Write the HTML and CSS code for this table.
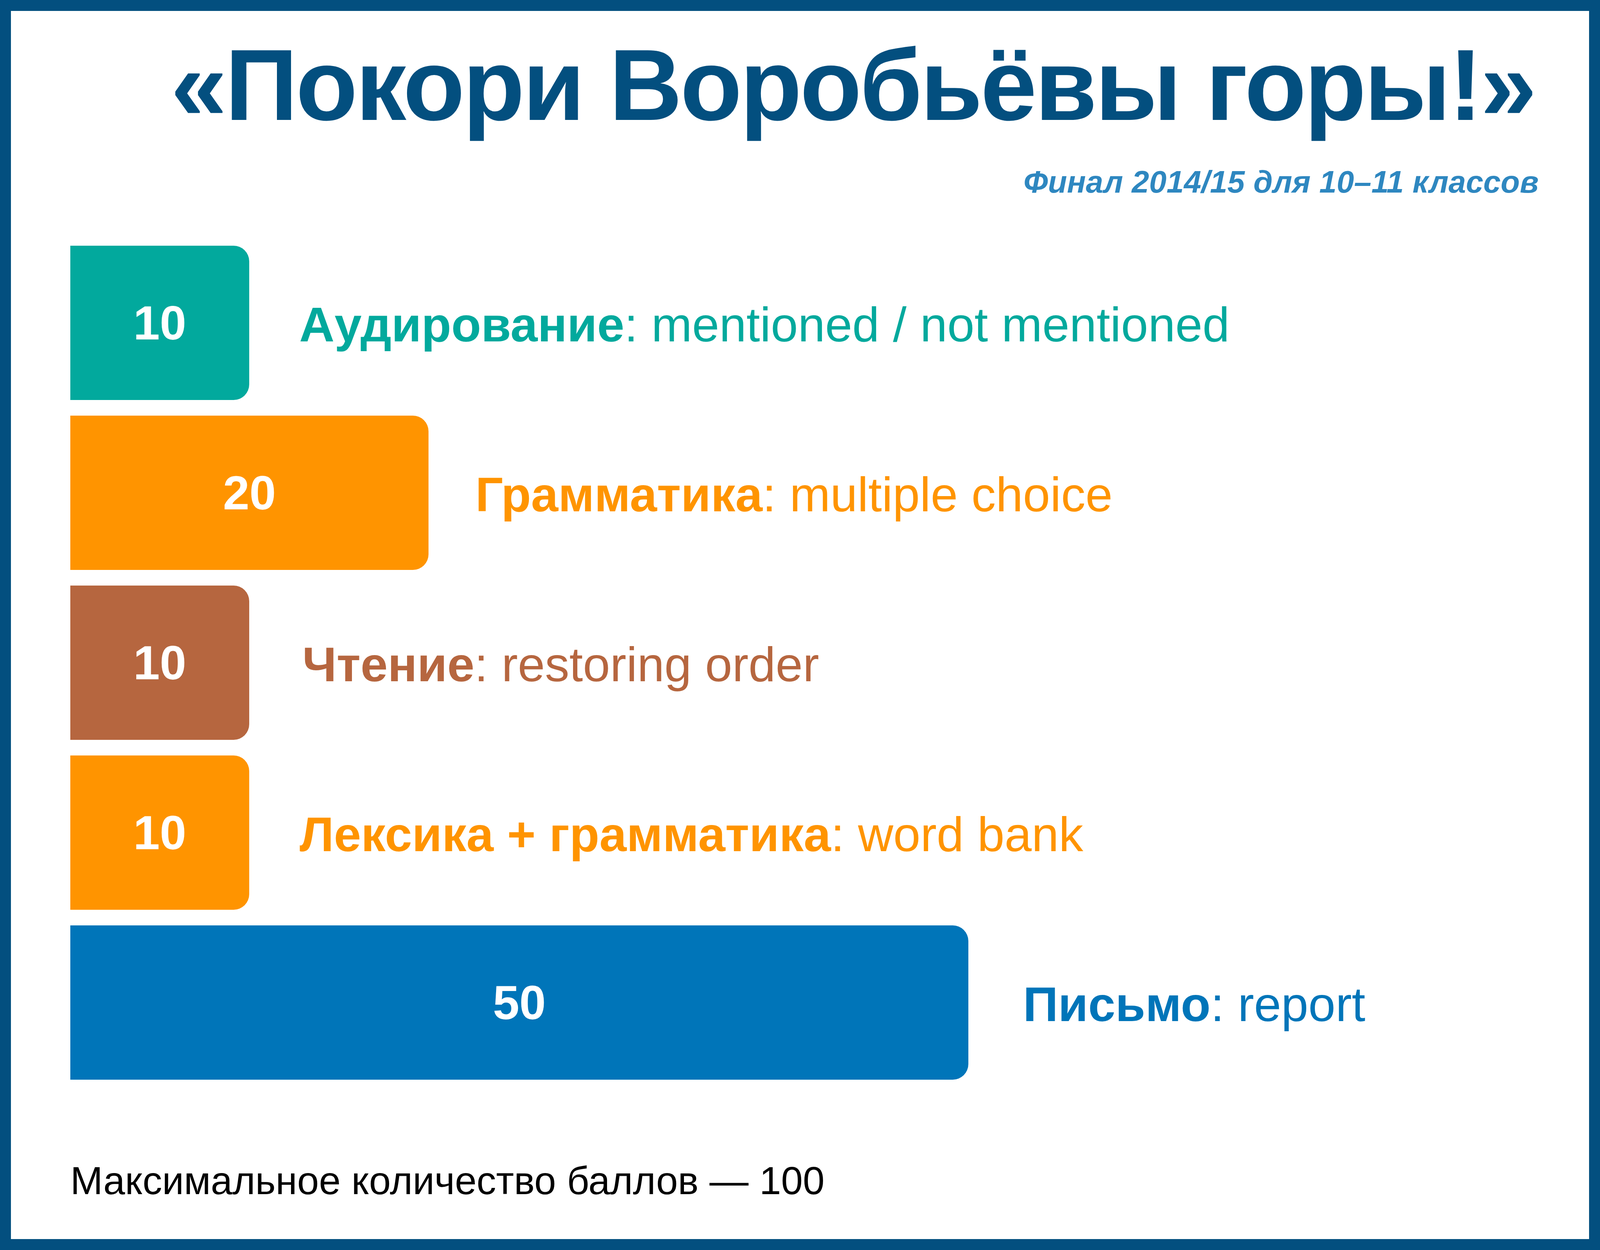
FILE: index.html
```html
<!DOCTYPE html>
<html lang="ru">
<head>
<meta charset="utf-8">
<title>«Покори Воробьёвы горы!»</title>
<link rel="stylesheet" href="styles.css">
</head>
<body>
<div class="slide">
  <header class="head">
    <h1 class="title">«Покори Воробьёвы горы!»</h1>
    <p class="subtitle">Финал 2014/15 для 10–11 классов</p>
  </header>
  <div class="chart">
    <div class="row row--teal row--a">
      <div class="bar" style="width:458px">10</div>
      <div class="label"><b>Аудирование</b>: mentioned / not mentioned</div>
    </div>
    <div class="row row--orange row--b">
      <div class="bar" style="width:917px">20</div>
      <div class="label"><b>Грамматика</b>: multiple choice</div>
    </div>
    <div class="row row--brown row--c">
      <div class="bar" style="width:458px">10</div>
      <div class="label"><b>Чтение</b>: restoring order</div>
    </div>
    <div class="row row--orange row--d">
      <div class="bar" style="width:458px">10</div>
      <div class="label"><b>Лексика + грамматика</b>: word bank</div>
    </div>
    <div class="row row--blue row--e">
      <div class="bar" style="width:2299px">50</div>
      <div class="label"><b>Письмо</b>: report</div>
    </div>
  </div>
  <p class="note">Максимальное количество баллов — 100</p>
</div>
</body>
</html>
```

FILE: styles.css
```css
html, body {
  margin: 0;
  padding: 0;
  background: #ffffff;
  overflow: hidden;
}

body {
  font-family: "Liberation Sans", Arial, "Noto Sans", sans-serif;
}

.slide {
  width: 100vw;
  height: 100vh;
  box-sizing: border-box;
  border: 28px solid #034f7f;
  padding: 60px 129px 0 152px;
  display: flex;
  flex-direction: column;
  overflow: hidden;
}

.head {
  display: flex;
  flex-direction: column;
  align-items: flex-end;
}

.title {
  margin: 0 10px 0 0;
  font-size: 259px;
  line-height: 260px;
  font-weight: 700;
  color: #034f7f;
  letter-spacing: -5px;
  white-space: nowrap;
}

.subtitle {
  margin: 78px 0 0 0;
  font-size: 80px;
  line-height: 80px;
  font-weight: 700;
  font-style: italic;
  color: #2e87c0;
  white-space: nowrap;
}

.chart {
  margin-top: 123px;
  display: flex;
  flex-direction: column;
  gap: 40px;
}

.row {
  display: flex;
  align-items: center;
  height: 395px;
}

.bar {
  height: 100%;
  flex: none;
  display: flex;
  align-items: center;
  justify-content: center;
  border-radius: 0 40px 40px 0;
  color: #ffffff;
  font-size: 122px;
  line-height: 122px;
  font-weight: 700;
}

.label {
  margin-left: 128px;
  font-size: 125px;
  line-height: 125px;
  font-weight: 400;
  white-space: nowrap;
  padding-top: 8px;
}

.label b {
  font-weight: 700;
}

.row--a .label { margin-left: 128px; }
.row--b .label { margin-left: 120px; }
.row--c .label { margin-left: 136px; }
.row--d .label { margin-left: 129px; }
.row--e .label { margin-left: 140px; }

.row--teal .bar { background: #02a99d; }
.row--teal .label { color: #02a99d; }

.row--orange .bar { background: #ff9400; }
.row--orange .label { color: #ff9400; }

.row--brown .bar { background: #b6663f; }
.row--brown .label { color: #b6663f; }

.row--blue .bar { background: #0075b9; }
.row--blue .label { color: #0075b9; }

.note {
  margin: 208px 0 0 0;
  font-size: 100px;
  line-height: 100px;
  color: #000000;
  white-space: nowrap;
}
```
